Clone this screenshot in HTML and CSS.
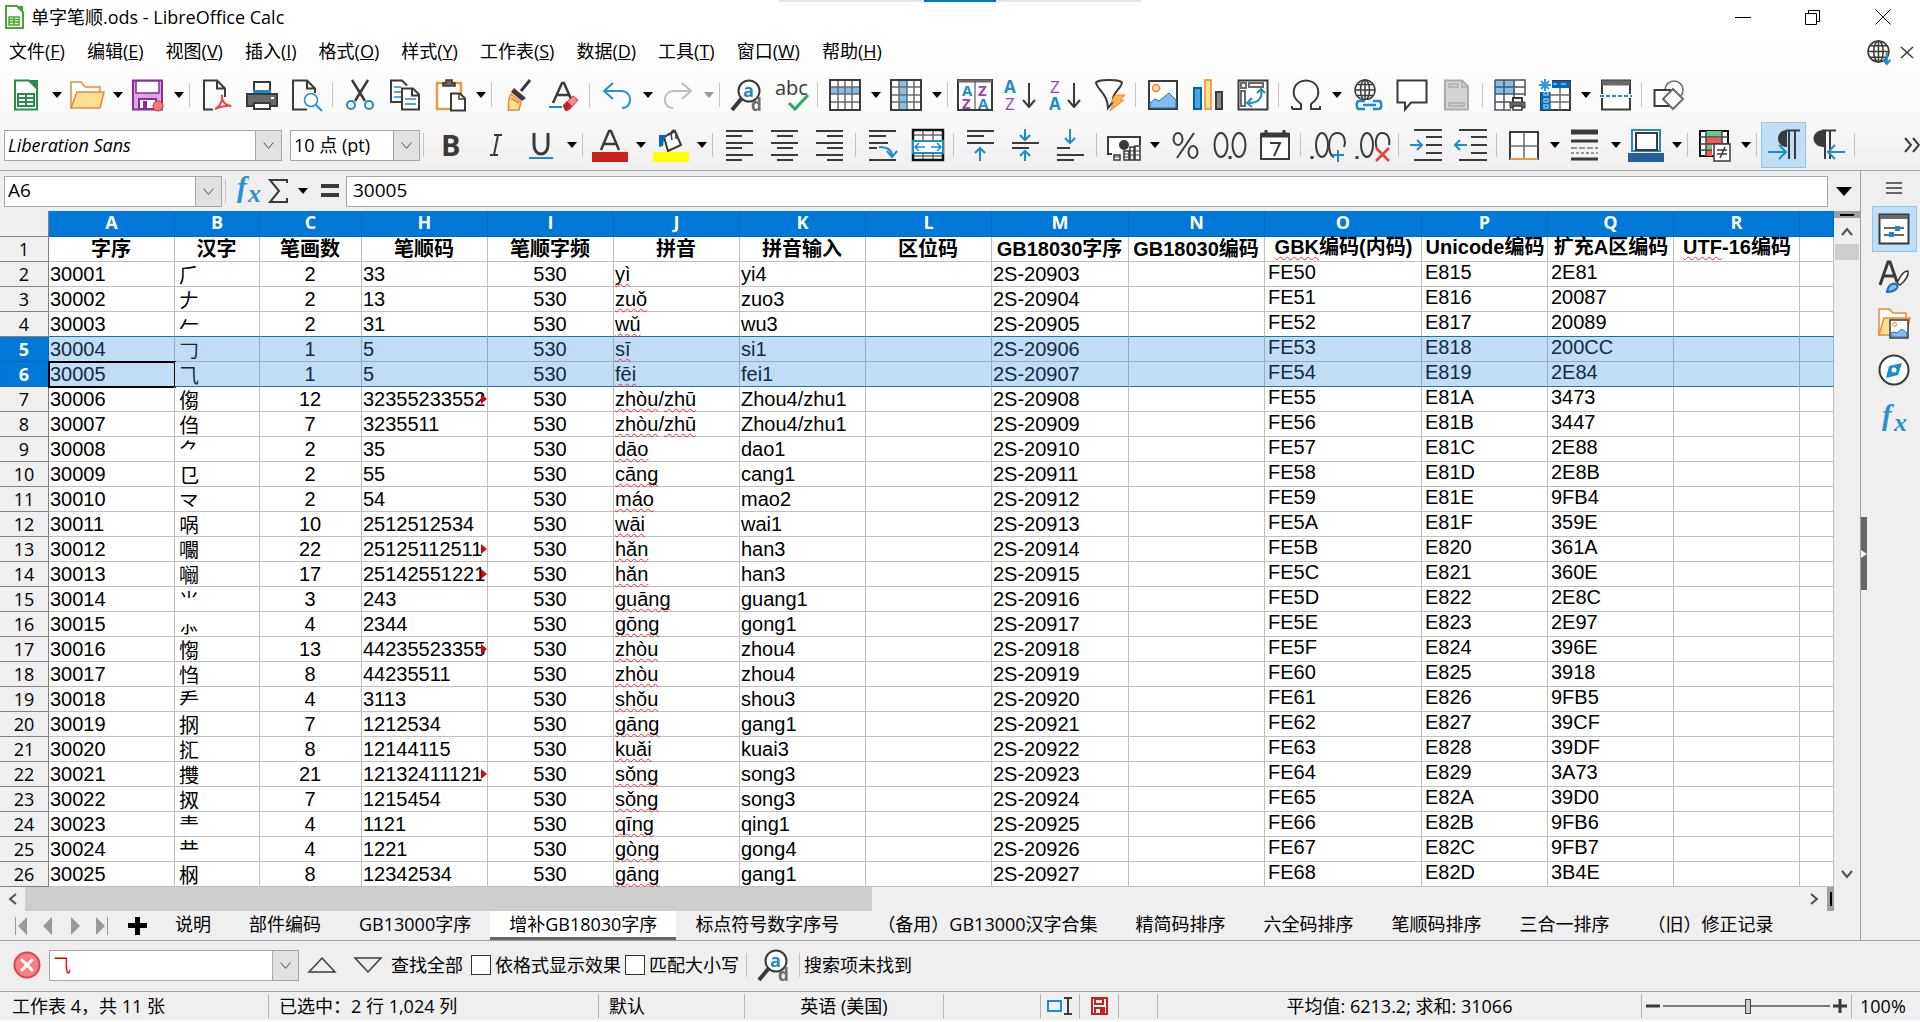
FILE: index.html
```
<!DOCTYPE html>
<html lang="zh-CN">
<head>
    <meta charset="UTF-8">
    <meta name="viewport" content="width=device-width, initial-scale=1.0">
    <title>单字笔顺.ods - LibreOffice Calc</title>
    <link rel="stylesheet" href="styles.css">
</head>
<body>
    <header class="top">
        <div class="snap-bar"><span></span></div>
        <div class="titlebar">
            <svg class="app-icon" viewBox="0 0 20 24"><path d="M2 1h11l6 6v16H2z" fill="#fff" stroke="#43a832" stroke-width="2"/><path d="M12 1h7v7z" fill="#43a832"/><path d="M5 12h10v8H5zM5 14.500h10M5 17h10M10 12v8" fill="none" stroke="#43a832" stroke-width="1.500"/></svg>
            <h1>单字笔顺.ods - LibreOffice Calc</h1>
            <div class="window-buttons">
                <button aria-label="最小化"><svg viewBox="0 0 16 16"><path d="M0 8.500h16"/></svg></button>
                <button aria-label="还原"><svg viewBox="0 0 16 16"><path d="M.5 4.500h11v11H.5zM3.500 4.500v-3h11v11h-3"/></svg></button>
                <button aria-label="关闭"><svg viewBox="0 0 16 16"><path d="M.5.5l15 15M15.500.5l-15 15"/></svg></button>
            </div>
        </div>
        <nav class="menubar">
            <button>文件(<u>F</u>)</button>
            <button>编辑(<u>E</u>)</button>
            <button>视图(<u>V</u>)</button>
            <button>插入(<u>I</u>)</button>
            <button>格式(<u>O</u>)</button>
            <button>样式(<u>Y</u>)</button>
            <button>工作表(<u>S</u>)</button>
            <button>数据(<u>D</u>)</button>
            <button>工具(<u>T</u>)</button>
            <button>窗口(<u>W</u>)</button>
            <button>帮助(<u>H</u>)</button>
            <div class="menubar-right">
                <svg width="25" height="25" viewBox="0 0 24 24" fill="none" stroke="#3a3a38" stroke-width="1.500"><circle cx="11" cy="11" r="10"/><ellipse cx="11" cy="11" rx="4.500" ry="10"/><path d="M1 11h20M11 1v20M3 5.500h16M3 16.500h16"/><path d="M19 12v10M15.500 19l3.500 4 3.500-4" stroke="#1e8bcd" stroke-width="2"/></svg>
                <svg width="14" height="14" viewBox="0 0 14 14" stroke="#3a3a38" stroke-width="1.500"><path d="M1 2l12 11M13 2L1 13"/></svg>
            </div>
        </nav>

        <div class="toolbar main-tools">
            <button class="tool drop" aria-label="新建"><svg viewBox="0 0 32 32"><path d="M5 1.500h14l8 8v21H5z" fill="#fff" stroke="#2e8b4f" stroke-width="2"/><path d="M17 1h11v10z" fill="#2e8b4f"/><path d="M8 15h16v12H8zM8 19h16M8 23h16M16 15v12" fill="none" stroke="#2e8b4f" stroke-width="2"/></svg></button>
            <button class="tool drop wide" aria-label="打开"><svg viewBox="0 0 36 32"><path d="M2 29V3h10l4 5h15v6" fill="#fff" stroke="#ed8733" stroke-width="1.500"/><path d="M8 13h27l-4 16H2z" fill="#fadf95" stroke="#ed8733" stroke-width="1.500"/></svg></button>
            <button class="tool drop" aria-label="保存"><svg viewBox="0 0 32 32"><path d="M1 1.500h29v29H1z" fill="#d9a9dd" stroke="#8a2d9b" stroke-width="2"/><path d="M4 2h23v12H4z" fill="#fff" stroke="#8a2d9b" stroke-width="1.500"/><path d="M7 20h17v10H7z" fill="#fff" stroke="#8a2d9b" stroke-width="2"/><path d="M11 22h4v8h-4z" fill="#8a2d9b"/><circle cx="26" cy="27" r="5" fill="#f8777a" stroke="#c9303a"/></svg></button>
            <i class="sep"></i>
            <button class="tool" aria-label="导出为 PDF"><svg viewBox="0 0 32 32" fill="none"><path d="M12 30.500H3v-29h13l8 8V18M16 1.500v8h8" stroke="#3a3a38" stroke-width="2"/><path d="M14 30c5-2 8-9 7-14-1 6 4 11 9 11-6-1-11 1-16 3z" stroke="#e8474d" stroke-width="2"/></svg></button>
            <button class="tool" aria-label="打印"><svg viewBox="0 0 32 32"><path d="M8 13V3h16v10" fill="#fff" stroke="#3a3a38" stroke-width="2"/><path d="M7 11h18v4H7z" fill="#1e8bcd"/><path d="M1 15h30v12H1z" fill="#6a6a68" stroke="#3a3a38" stroke-width="2"/><path d="M8 24h16v6H8z" fill="#fff" stroke="#3a3a38" stroke-width="2"/><path d="M25 19h3" stroke="#fff" stroke-width="2"/></svg></button>
            <button class="tool" aria-label="打印预览"><svg viewBox="0 0 32 32" fill="none"><path d="M16 30.500H2v-29h14l8 8V14M16 1.500v8h8" stroke="#3a3a38" stroke-width="2"/><circle cx="20" cy="21" r="6.500" fill="#fff" stroke="#1e8bcd" stroke-width="1.500"/><path d="M25 26l6 6" stroke="#1e8bcd" stroke-width="2"/></svg></button>
            <i class="sep"></i>
            <button class="tool" aria-label="剪切"><svg viewBox="0 0 32 32" fill="none"><path d="M8 1l13 21M24 1L11 22" stroke="#3a3a38" stroke-width="2.500"/><circle cx="7" cy="26" r="4" stroke="#1e8bcd" stroke-width="2"/><circle cx="25" cy="26" r="4" stroke="#1e8bcd" stroke-width="2"/></svg></button>
            <button class="tool" aria-label="复制"><svg viewBox="0 0 32 32" fill="none"><path d="M12 23H2V1.500h11l5 5" stroke="#3a3a38" stroke-width="2"/><path d="M5 8h7M5 13h7M5 18h7" stroke="#1e8bcd" stroke-width="1.500"/><path d="M13 9.500h11l6 6v15H13zM23 9.500v7h7" fill="#fff" stroke="#3a3a38" stroke-width="2"/><path d="M16 20h11M16 25h11" stroke="#1e8bcd" stroke-width="1.500"/></svg></button>
            <button class="tool drop" aria-label="粘贴"><svg viewBox="0 0 32 32"><path d="M3 4h24v26H3z" fill="#fff" stroke="#ed9a3f" stroke-width="2.500"/><path d="M9 7V4h3V1h6v3h3v3z" fill="#6a6a68" stroke="#3a3a38" stroke-width="1.500"/><path d="M17 14.500h9l5 5v12H17z" fill="#fff" stroke="#3a3a38" stroke-width="2"/><path d="M25 14v6h6" fill="none" stroke="#3a3a38" stroke-width="1.500"/></svg></button>
            <i class="sep"></i>
            <button class="tool" aria-label="克隆格式"><svg viewBox="0 0 32 32"><path d="M27 1l-9 11" stroke="#3a3a38" stroke-width="3"/><path d="M11 9l12 10-4 3-11-9z" fill="#3a3a38"/><path d="M8 15l10 8-2 8H5c2-4-2-6 3-16z" fill="#fadf95" stroke="#ed8733" stroke-width="1.500"/><path d="M8 19l8 5" stroke="#ed8733" stroke-width="2"/></svg></button>
            <button class="tool" aria-label="清除格式"><svg viewBox="0 0 32 32"><path d="M5 24L14 4h2l7 16M9 16h12" fill="none" stroke="#3a3a38" stroke-width="2.500"/><path d="M1 28h13" stroke="#1e8bcd" stroke-width="2"/><path d="M15 27l10-10 5 4-8 9-4 2z" fill="#f8898c" stroke="#d8323a"/><path d="M15 26l4-4 5 5-4 4h-3z" fill="#c9211e"/></svg></button>
            <i class="sep"></i>
            <button class="tool drop" aria-label="撤销"><svg viewBox="0 0 32 32" fill="none" stroke="#2a8fd0" stroke-width="2"><path d="M12 4L3 12l9 8M3 12h17c12 0 12 17 1 17"/></svg></button>
            <button class="tool drop faded" aria-label="恢复"><svg viewBox="0 0 32 32" fill="none" stroke="#bdbdbd" stroke-width="2"><path d="M20 4l9 8-9 8M29 12H12c-12 0-12 17-1 17"/></svg></button>
            <i class="sep"></i>
            <button class="tool" aria-label="查找与替换"><svg viewBox="0 0 32 32"><circle cx="18" cy="12" r="10.500" fill="#fff" stroke="#3a3a38" stroke-width="2"/><path d="M11 19L1 31" stroke="#3a3a38" stroke-width="4"/><text x="12" y="18" font-size="18" font-weight="bold" fill="#1e8bcd">a</text><text x="20" y="32" font-size="17" font-weight="bold" fill="#6a6a68">d</text></svg></button>
            <button class="tool wide" aria-label="拼写检查"><svg viewBox="0 0 36 32"><text x="1" y="16" font-size="20" fill="#3a3a38">abc</text><path d="M15 24l6 6 13-14" fill="none" stroke="#2fa866" stroke-width="3"/></svg></button>
            <i class="sep"></i>
            <button class="tool drop" aria-label="行"><svg viewBox="0 0 32 32"><path d="M1 1h30v30H1z" fill="#fff"/><path d="M1 8h30v7H1z" fill="#83beec"/><path d="M9 1v30M16 1v30M23 1v30M1 8h30M1 15h30M1 23h30" stroke="#6a6a68" stroke-width="1.500"/><path d="M1 1h30v30H1z" fill="none" stroke="#3a3a38" stroke-width="2"/></svg></button>
            <button class="tool drop" aria-label="列"><svg viewBox="0 0 32 32"><path d="M1 1h30v30H1z" fill="#fff"/><path d="M9 1h8v30H9z" fill="#83beec"/><path d="M9 1v30M17 1v30M24 1v30M1 8h30M1 16h30M1 23h30" stroke="#6a6a68" stroke-width="1.500"/><path d="M1 1h30v30H1z" fill="none" stroke="#3a3a38" stroke-width="2"/></svg></button>
            <i class="sep"></i>
            <button class="tool wide" aria-label="排序"><svg viewBox="0 0 36 32"><path d="M1 1h34v30H1z" fill="#fff" stroke="#3a3a38" stroke-width="2"/><path d="M1 2h34" stroke="#6a6a68" stroke-width="3"/><path d="M18 3v28" stroke="#3a3a38"/><g font-size="15" font-weight="bold"><text x="5" y="17" fill="#1e8bcd">A</text><text x="5" y="30" fill="#a03fb0">Z</text><text x="21" y="17" fill="#a03fb0">Z</text><text x="21" y="30" fill="#1e8bcd">A</text></g></svg></button>
            <button class="tool" aria-label="升序排序"><svg viewBox="0 0 32 32"><g font-size="17"><text x="0" y="14" fill="#1e8bcd" font-weight="bold">A</text><text x="1" y="31" fill="#a03fb0">Z</text></g><path d="M25 4v24M19 21l6 7 6-7" fill="none" stroke="#3a3a38" stroke-width="2"/></svg></button>
            <button class="tool" aria-label="降序排序"><svg viewBox="0 0 32 32"><g font-size="17"><text x="1" y="14" fill="#a03fb0">Z</text><text x="0" y="31" fill="#1e8bcd" font-weight="bold">A</text></g><path d="M25 4v24M19 21l6 7 6-7" fill="none" stroke="#3a3a38" stroke-width="2"/></svg></button>
            <button class="tool" aria-label="自动筛选"><svg viewBox="0 0 32 32"><path d="M2 4c0-4 26-4 26 0-1 5-9 10-9 16v3l-5 6c0-13-10-18-12-25z" fill="#fff" stroke="#3a3a38" stroke-width="2"/><path d="M21 16h10l-5 5h4L16 32l4-9h-3z" fill="#fbb650" stroke="#ed8733"/></svg></button>
            <i class="sep"></i>
            <button class="tool" aria-label="插入图像"><svg viewBox="0 0 32 32"><path d="M2 2h28v28H2z" fill="#fff" stroke="#3a3a38" stroke-width="2"/><circle cx="9" cy="9" r="3.500" fill="#fadf95" stroke="#ed8733" stroke-width="1.500"/><path d="M3 29v-5l5-4 4 2 10-8 7 7v8z" fill="#83beec" stroke="#1e6fb8"/></svg></button>
            <button class="tool" aria-label="插入图表"><svg viewBox="0 0 32 32"><path d="M2 9h7v21H2z" fill="#4aa5e0" stroke="#0063b1" stroke-width="2"/><path d="M13 1h6v29h-6z" fill="#fadf95" stroke="#ed8733" stroke-width="1.500"/><path d="M24 13h6v17h-6z" fill="#8a8a88" stroke="#3a3a38" stroke-width="2"/></svg></button>
            <button class="tool" aria-label="数据透视表"><svg viewBox="0 0 32 32" fill="none"><path d="M1.500 1.500h29v29h-29z" fill="#fff" stroke="#3a3a38" stroke-width="2"/><path d="M4 4h5v5H4zM12 4h14v4H12zM4 12h4v15H4z" stroke="#6a6a68" stroke-width="2"/><path d="M24 11c2 8-3 13-12 13M20 14l4-4 4 4M15 19l-5 5 5 4" stroke="#1e8bcd" stroke-width="2"/></svg></button>
            <i class="sep"></i>
            <button class="tool drop" aria-label="特殊字符"><svg viewBox="0 0 32 32" fill="none" stroke="#3a3a38" stroke-width="2"><path d="M2 30h9v-5C-2 16 4 1.500 16 1.500S34 16 21 25v5h9v-3M2 30v-3"/></svg></button>
            <button class="tool" aria-label="插入超链接"><svg viewBox="0 0 32 32" fill="none" stroke="#3a3a38" stroke-width="1.500"><circle cx="14" cy="11" r="10"/><ellipse cx="14" cy="11" rx="4.500" ry="10"/><path d="M4 11h20M14 1v20M6 5.500h16M6 16.500h16"/><path d="M5 21h24v10H5z" fill="#fafafa" stroke="none"/><path d="M14 22H8c-3 0-3 8 0 8h6M22 22h6c3 0 3 8 0 8h-6M12 26h13" stroke="#1e8bcd" stroke-width="2.500"/></svg></button>
            <button class="tool" aria-label="插入批注"><svg viewBox="0 0 32 32"><path d="M1.500 1.500h29v22H15l-6 7v-7H1.500z" fill="#fff" stroke="#3a3a38" stroke-width="2"/></svg></button>
            <button class="tool" aria-label="页眉和页脚"><svg viewBox="0 0 32 32"><path d="M4 1.500h17l6 6v23H4z" fill="#d4d4d4" stroke="#ababab" stroke-width="2"/><path d="M8 5h9v3H8zM8 24h15v3H8zM21 1v7h6" fill="none" stroke="#ababab" stroke-width="1.500"/></svg></button>
            <i class="sep"></i>
            <button class="tool" aria-label="定义打印区域"><svg viewBox="0 0 32 32"><path d="M1 1h30v30H1z" fill="#fff"/><path d="M1 1h20v14H1z" fill="#83beec"/><path d="M1 1h30v16M1 1v30h16M10 1v30M20 1v17M1 8h30M1 15h30M1 23h15" fill="none" stroke="#4a5560" stroke-width="1.500"/><path d="M19 23v-4h9v4" fill="#fff" stroke="#3a3a38" stroke-width="2"/><path d="M16 23h15v6H16z" fill="#6a6a68" stroke="#3a3a38"/><path d="M19 27h9v4h-9z" fill="#fff" stroke="#3a3a38" stroke-width="1.500"/></svg></button>
            <button class="tool drop" aria-label="冻结行和列"><svg viewBox="0 0 32 32"><path d="M2 2h29v29H2z" fill="#fff" stroke="#3a3a38" stroke-width="2"/><path d="M11 9v22M21 9v22M11 16h20M11 23h20" stroke="#6a6a68" stroke-width="1.500"/><path d="M2 2h29v7H11v22H2z" fill="#0069bd"/><path d="M14 5h4M22 5h5M5 13h4v3H5zM5 20h4v3H5zM5 26h4v3H5z" fill="none" stroke="#83beec" stroke-width="1.500"/><path d="M-1-1h14v14H-1z" fill="#fcfcfc"/><path d="M6 0v12M0 6h12M2 2l8 8M10 2l-8 8" stroke="#2a9be0" stroke-width="2"/></svg></button>
            <button class="tool" aria-label="拆分窗口"><svg viewBox="0 0 32 32"><path d="M2 1.500h28v29H2z" fill="#fff" stroke="#3a3a38" stroke-width="2"/><path d="M2 4h28" stroke="#6a6a68" stroke-width="5"/><path d="M0 17h32" stroke="#fff" stroke-width="4"/><path d="M0 17h32" stroke="#1e8bcd" stroke-width="2" stroke-dasharray="4 2"/></svg></button>
            <i class="sep"></i>
            <button class="tool" aria-label="显示绘图功能"><svg viewBox="0 0 32 32" fill="#fff" stroke-width="1.500"><circle cx="21" cy="11" r="9" stroke="#6a6a68"/><path d="M1.500 11h16v16h-16z" stroke="#3a3a38" stroke-width="2"/><path d="M20 10l10 10-10 10-10-10z" stroke="#6a6a68" stroke-width="2"/></svg></button>
        </div>

        <div class="toolbar format-tools">
            <div class="combo font-name"><select aria-label="字体名称"><option>Liberation Sans</option></select><svg class="chev" viewBox="0 0 26 30"><path d="M8 12l5 6 5-6"/></svg></div>
            <div class="combo font-size"><select aria-label="字号"><option>10 点 (pt)</option></select><svg class="chev" viewBox="0 0 26 30"><path d="M8 12l5 6 5-6"/></svg></div>
            <i class="sep"></i>
            <button class="tool" aria-label="粗体"><svg viewBox="0 0 32 32"><text x="6" y="27" font-size="29" font-weight="bold" fill="#3a3a38">B</text></svg></button>
            <button class="tool" aria-label="斜体"><svg viewBox="0 0 32 32"><path d="M14 6h8M10 26h8M18 6l-4 20" stroke="#3a3a38" stroke-width="2"/></svg></button>
            <button class="tool drop" aria-label="下划线"><svg viewBox="0 0 32 32" fill="none"><path d="M9 4v12c0 12 14 12 14 0V4" stroke="#3a3a38" stroke-width="3"/><path d="M4 29h24" stroke="#1e8bcd" stroke-width="2"/></svg></button>
            <i class="sep"></i>
            <button class="tool drop wide" aria-label="字体颜色"><svg viewBox="0 0 36 32"><path d="M9 21L17 2h2l8 19M12 15h12" fill="none" stroke="#3a3a38" stroke-width="2.500"/><path d="M0 23h36v10H0z" fill="#c9211e"/></svg></button>
            <button class="tool drop wide" aria-label="背景颜色"><svg viewBox="0 0 36 32"><path d="M11 8l11-6 6 14-13 6z" fill="#fff" stroke="#3a3a38" stroke-width="2"/><path d="M19 11c-3-13 5-13 4-1" fill="none" stroke="#3a3a38" stroke-width="1.500"/><path d="M6 18V6h9l-4 4-1 7z" fill="#0069bd"/><path d="M0 23h36v10H0z" fill="#ff0"/></svg></button>
            <i class="sep"></i>
            <button class="tool" aria-label="左对齐"><svg viewBox="0 0 32 32" stroke="#3a3a38" stroke-width="2"><path d="M2 2h27M2 7h16M2 14h27M2 19h16M2 26h27M2 31h16"/></svg></button>
            <button class="tool" aria-label="水平居中"><svg viewBox="0 0 32 32" stroke="#3a3a38" stroke-width="2"><path d="M2 2h27M8 7h16M2 14h27M8 19h16M2 26h27M8 31h16"/></svg></button>
            <button class="tool" aria-label="右对齐"><svg viewBox="0 0 32 32" stroke="#3a3a38" stroke-width="2"><path d="M2 2h27M13 7h16M2 14h27M13 19h16M2 26h27M13 31h16"/></svg></button>
            <i class="sep"></i>
            <button class="tool" aria-label="自动换行"><svg viewBox="0 0 32 32" fill="none" stroke="#3a3a38" stroke-width="2"><path d="M2 2h27M2 7h17M2 14h19M2 19h8M2 31h27"/><path d="M12 18c8 0 13 2 13 9M20 22l5 6 5-6" stroke="#1e8bcd"/></svg></button>
            <button class="tool" aria-label="合并居中"><svg viewBox="0 0 32 32"><path d="M1 1h30v30H1z" fill="#fff" stroke="#111" stroke-width="2.500"/><path d="M11 2v28M21 2v28M2 6h28M2 27h28" stroke="#6a6a68" stroke-width="1.500"/><path d="M1 12h30v12H1z" fill="#fff" stroke="#1e8bcd" stroke-width="2"/><path d="M3 18h10M19 18h10M7 14l-4 4 4 4M25 14l4 4-4 4" fill="none" stroke="#1e8bcd" stroke-width="1.500"/></svg></button>
            <i class="sep"></i>
            <button class="tool" aria-label="顶端对齐"><svg viewBox="0 0 32 32" fill="none" stroke="#3a3a38" stroke-width="2"><path d="M2 2h27M2 7h17M2 14h27"/><path d="M15 32V19M10 24l5-5 5 5" stroke="#1e8bcd"/></svg></button>
            <button class="tool" aria-label="垂直居中"><svg viewBox="0 0 32 32" fill="none" stroke="#3a3a38" stroke-width="2"><path d="M2 14h27M2 19h17"/><path d="M15 0v11M10 6l5 5 5-5M15 32V22M10 27l5-5 5 5" stroke="#1e8bcd"/></svg></button>
            <button class="tool" aria-label="底端对齐"><svg viewBox="0 0 32 32" fill="none" stroke="#3a3a38" stroke-width="2"><path d="M2 19h13M2 26h27M2 31h17"/><path d="M15 0v14M10 9l5 5 5-5" stroke="#1e8bcd"/></svg></button>
            <i class="sep"></i>
            <button class="tool drop wide" aria-label="货币格式"><svg viewBox="0 0 36 32" fill="#fff" stroke="#3a3a38" stroke-width="2"><path d="M6 25H2V8h32v8"/><circle cx="18" cy="16" r="4" fill="#3a3a38"/><path d="M18 22h5v9h-5zM24 18h4v13h-4zM29 17h5v14h-5zM8 26h6v5H8z" stroke-width="1.500"/><path d="M18 25h5M18 28h5M24 22h10M24 26h10M8 28h6" stroke-width="1"/></svg></button>
            <button class="tool" aria-label="百分比格式"><svg viewBox="0 0 32 32" fill="none" stroke="#3a3a38" stroke-width="2"><ellipse cx="9" cy="10" rx="4.500" ry="6"/><ellipse cx="24" cy="23" rx="4.500" ry="6"/><path d="M25 4L8 29"/></svg></button>
            <button class="tool wide" aria-label="数字格式"><svg viewBox="0 0 36 32" fill="none" stroke="#3a3a38" stroke-width="2"><ellipse cx="9" cy="16" rx="6.500" ry="12"/><ellipse cx="27" cy="16" rx="6.500" ry="12"/><path d="M18 27v3" stroke-width="3"/></svg></button>
            <button class="tool" aria-label="日期格式"><svg viewBox="0 0 32 32"><path d="M2 5h28v25H2z" fill="#fff" stroke="#3a3a38" stroke-width="2"/><path d="M2 6h28" stroke="#3a3a38" stroke-width="5"/><path d="M7 1v5M25 1v5" stroke="#3a3a38" stroke-width="3"/><path d="M11 14h10l-6 13" fill="none" stroke="#3a3a38" stroke-width="2"/></svg></button>
            <i class="sep"></i>
            <button class="tool wide" aria-label="增加小数位"><svg viewBox="0 0 36 32" fill="none" stroke="#3a3a38" stroke-width="2"><path d="M2 27v3" stroke-width="3"/><ellipse cx="12" cy="16" rx="6" ry="12"/><path d="M24 28c-7-2-7-24 3-24 8 0 9 9 7 14"/><path d="M28 21v12M22 26h12" stroke="#1e8bcd"/></svg></button>
            <button class="tool wide" aria-label="减少小数位"><svg viewBox="0 0 36 32" fill="none" stroke="#3a3a38" stroke-width="2"><path d="M2 27v3" stroke-width="3"/><ellipse cx="12" cy="16" rx="6" ry="12"/><path d="M22 20c-3-8 0-16 5-16 7 0 8 7 7 12"/><path d="M21 19l13 13M34 19L21 32" stroke="#ed3d3b" stroke-width="2.500"/></svg></button>
            <i class="sep"></i>
            <button class="tool wide" aria-label="增加缩进"><svg viewBox="0 0 36 32" fill="none" stroke="#3a3a38" stroke-width="2"><path d="M6 1h28M18 8h16M18 16h16M18 24h16M6 31h28"/><path d="M2 16h12M9 11l5 5-5 5" stroke="#1e8bcd"/></svg></button>
            <button class="tool wide" aria-label="减少缩进"><svg viewBox="0 0 36 32" fill="none" stroke="#3a3a38" stroke-width="2"><path d="M6 1h28M18 8h16M18 16h16M18 24h16M6 31h28"/><path d="M14 16H2M7 11l-5 5 5 5" stroke="#1e8bcd"/></svg></button>
            <i class="sep"></i>
            <button class="tool drop" aria-label="边框"><svg viewBox="0 0 32 32"><path d="M2 3h28v27H2z" fill="#fff" stroke="#3a3a38" stroke-width="2"/><path d="M16 3v27M2 17h28" stroke="#6a6a68" stroke-width="1.500"/><path d="M2 30h28" stroke="#ed9a3f" stroke-width="2"/></svg></button>
            <button class="tool drop" aria-label="边框样式"><svg viewBox="0 0 32 32" stroke="#3a3a38"><path d="M2 3h27" stroke-width="5"/><path d="M2 12h27" stroke-width="3"/><path d="M2 19h27" stroke-dasharray="6 2"/><path d="M2 24h27" stroke-dasharray="3 2"/><path d="M2 30h27" stroke-width="3"/></svg></button>
            <button class="tool drop wide" aria-label="边框颜色"><svg viewBox="0 0 36 32"><path d="M4 1h28v21H4z" fill="#fff" stroke="#1e8bcd" stroke-width="2"/><path d="M8 4h21v17H8z" fill="#fff" stroke="#3a3a38" stroke-width="2"/><path d="M0 24h36v9H0z" fill="#2a6099"/></svg></button>
            <i class="sep"></i>
            <button class="tool drop" aria-label="条件格式"><svg viewBox="0 0 32 32"><path d="M1 2h28v25H1z" fill="#fff" stroke="#111" stroke-width="2"/><path d="M7 2h16v6H7zM7 15h6v5H7z" fill="#6fc58a"/><path d="M7 9h16v6H7zM7 21h6v6H7z" fill="#f0585c"/><path d="M7 2v25M23 2v12M1 8h28M1 15h28M1 21h12" stroke="#444" stroke-width="1.500"/><path d="M15 15h16v17H15z" fill="#fff" stroke="#3a3a38" stroke-width="1.500"/><path d="M18 21h10M18 25h10M26 18l-5 11" stroke="#3a3a38" stroke-width="1.500"/></svg></button>
            <i class="sep"></i>
            <button class="tool active" aria-label="从左到右" aria-pressed="true"><svg viewBox="0 0 32 32" fill="none"><path d="M19 18c-12 0-12-17 0-17z" fill="#3a3a38"/><path d="M18 1.500h14M21 1v29M27 1v29" stroke="#3a3a38" stroke-width="2"/><path d="M0 23h18M11 16l7 7-7 7" stroke="#1e8bcd" stroke-width="2"/></svg></button>
            <button class="tool" aria-label="从右到左"><svg viewBox="0 0 32 32" fill="none"><path d="M11 18C-3 18-3 1 11 1z" fill="#3a3a38"/><path d="M9 1.500h14M12 1v29M17 1v29" stroke="#3a3a38" stroke-width="2"/><path d="M32 23H15M22 16l-7 7 7 7" stroke="#1e8bcd" stroke-width="2"/></svg></button>
            <i class="sep"></i>
            <button class="more" aria-label="更多"><svg width="16" height="18" viewBox="0 0 16 18" fill="none" stroke="#3a3a38" stroke-width="2"><path d="M1 2l6 7-6 7M9 2l6 7-6 7"/></svg></button>
        </div>
    </header>

    <main class="work">
        <div class="document">
            <div class="formula-bar">
                <div class="combo name-box"><input type="text" value="A6" aria-label="名称框"><svg class="chev" viewBox="0 0 26 30"><path d="M8 12l5 6 5-6"/></svg></div>
                <i class="sep"></i>
                <button class="fx" aria-label="函数向导"><svg viewBox="0 0 28 32"><text x="2" y="22" class="fx-f">f</text><text x="13" y="27" class="fx-x">x</text></svg></button>
                <button class="sigma" aria-label="选择函数"><svg viewBox="0 0 20 26" fill="none" stroke="#3a3a38" stroke-width="2"><path d="M19 5V2H2l9 11L2 24h17v-4"/></svg></button>
                <button class="equals" aria-label="公式"><svg viewBox="0 0 18 14"><path d="M0 2h18M0 11h18" stroke="#3a3a38" stroke-width="4"/></svg></button>
                <input class="formula" type="text" value="30005" aria-label="编辑栏">
                <button class="expand" aria-label="展开编辑栏"></button>
            </div>

            <div class="sheet-area">
                <div class="sheet">
                    <table>
                        <colgroup>
                            <col class="w-head"><col class="w-m"><col class="w-b"><col class="w-c"><col class="w-m"><col class="w-m"><col class="w-m"><col class="w-m"><col class="w-m"><col class="w-l"><col class="w-n"><col class="w-o"><col class="w-m"><col class="w-m"><col class="w-m"><col>
                        </colgroup>
                        <thead>
                            <tr><th></th><th>A</th><th>B</th><th>C</th><th>H</th><th>I</th><th>J</th><th>K</th><th>L</th><th>M</th><th>N</th><th>O</th><th>P</th><th>Q</th><th>R</th><th></th></tr>
                        </thead>
                        <tbody id="rows">
                            <tr class="titles"><th>1</th><td>字序</td><td>汉字</td><td>笔画数</td><td>笔顺码</td><td>笔顺字频</td><td>拼音</td><td>拼音输入</td><td>区位码</td><td>GB18030字序</td><td>GB18030编码</td><td class="raised"><span class="spell">GBK</span>编码(内码)</td><td class="raised">Unicode编码</td><td class="raised">扩充A区编码</td><td class="raised"><span class="spell">UTF</span>-16编码</td><td></td></tr>
                        </tbody>
                    </table>
                </div>
                <div class="vscroll">
                    <div class="split-v"></div>
                    <svg class="up" viewBox="0 0 12 9"><path d="M1 8l5-6 5 6"/></svg>
                    <div class="thumb-v"></div>
                    <svg class="down" viewBox="0 0 12 9"><path d="M1 1l5 6 5-6"/></svg>
                </div>
            </div>

            <div class="hscroll">
                <svg viewBox="0 0 9 12"><path d="M8 1L2 6l6 5"/></svg>
                <div class="thumb-h"></div>
                <div class="track-h"></div>
                <svg viewBox="0 0 9 12"><path d="M1 1l6 5-6 5"/></svg>
                <div class="split-h"></div>
            </div>

            <div class="tabs">
                <div class="tab-nav">
                    <button aria-label="第一张"><svg viewBox="0 0 12 18"><path d="M12 0v18L3 9zM0 0h1v18H0z"/></svg></button>
                    <button aria-label="上一张"><svg viewBox="0 0 12 18"><path d="M10 0v18L1 9z"/></svg></button>
                    <button aria-label="下一张"><svg viewBox="0 0 12 18"><path d="M2 0v18l9-9z"/></svg></button>
                    <button aria-label="最后一张"><svg viewBox="0 0 12 18"><path d="M0 0v18l9-9zM11 0h1v18h-1z"/></svg></button>
                </div>
                <button class="add-tab" aria-label="添加工作表"><svg viewBox="0 0 20 20"><path d="M7 1h5v6h7v5h-7v7H7v-7H0V7h7z"/></svg></button>
                <button class="tab">说明</button>
                <button class="tab">部件编码</button>
                <button class="tab">GB13000字序</button>
                <button class="tab current">增补GB18030字序</button>
                <button class="tab">标点符号数字序号</button>
                <button class="tab">（备用）GB13000汉字合集</button>
                <button class="tab">精简码排序</button>
                <button class="tab">六全码排序</button>
                <button class="tab">笔顺码排序</button>
                <button class="tab">三合一排序</button>
                <button class="tab">（旧）修正记录</button>
            </div>
        </div>

        <aside class="sidebar">
            <div class="grip"><svg viewBox="0 0 6 10"><path d="M0 1l6 4-6 4z"/></svg></div>
            <button class="side-menu" aria-label="侧边栏设置"><svg viewBox="0 0 16 12"><path d="M0 1h16M0 6h16M0 11h16" stroke="#3a3a38" stroke-width="1.500"/></svg></button>
            <button class="side active" aria-label="属性"><svg viewBox="0 0 32 32"><path d="M1.500 1.500h29v29h-29z" fill="#fff" stroke="#3a3a38" stroke-width="2"/><path d="M2 4h28" stroke="#6a6a68" stroke-width="4"/><path d="M6 15h20M6 22h20" stroke="#3a3a38" stroke-width="1.500"/><path d="M17 13h5v5h-5zM11 19h5v5h-5z" fill="#1e8bcd"/></svg></button>
            <button class="side" aria-label="样式"><svg viewBox="0 0 32 32"><path d="M2 25L10 2h2l7 20M5 16h12" fill="none" stroke="#3a3a38" stroke-width="3"/><path d="M30 11c-5 0-8 6-11 12l3 2c5-4 9-8 8-14z" fill="#fff" stroke="#3a3a38" stroke-width="1.500"/><path d="M9 32c1-7 5-9 9-8 4 2 0 8-9 8z" fill="#83beec" stroke="#1e6fb8" stroke-width="2"/></svg></button>
            <button class="side" aria-label="图库"><svg viewBox="0 0 32 32"><path d="M1 28V2h10l4 4h13v5" fill="#fff" stroke="#ed8733" stroke-width="1.500"/><path d="M6 11h26l-4 17H1z" fill="#fadf95" stroke="#ed8733" stroke-width="1.500"/><path d="M12 13h18v18H12z" fill="#fff" stroke="#3a3a38" stroke-width="1.500"/><circle cx="16.500" cy="17.500" r="2" fill="none" stroke="#ed8733"/><path d="M13 30v-4l3-1 3 1 5-4 5 4v4z" fill="#83beec" stroke="#1e6fb8"/></svg></button>
            <button class="side" aria-label="导航"><svg viewBox="0 0 32 32"><circle cx="16" cy="16" r="14.500" fill="#fff" stroke="#3a3a38" stroke-width="2"/><path d="M24 9l-4 12-12 3 3-12z" fill="#1e8bcd"/><circle cx="16" cy="16" r="2.500" fill="#fff"/></svg></button>
            <button class="side" aria-label="函数"><svg viewBox="0 0 28 32"><text x="2" y="24" class="fx-f">f</text><text x="14" y="30" class="fx-x">x</text></svg></button>
        </aside>
    </main>

    <div class="findbar">
        <button class="close-find" aria-label="关闭查找栏"><svg viewBox="0 0 28 28"><circle cx="14" cy="14" r="12.500" fill="#f77e81" stroke="#d24a50" stroke-width="2"/><path d="M8 8l12 12M20 8L8 20" stroke="#fff" stroke-width="3"/></svg></button>
        <div class="combo find-text"><input type="text" value="⺄" aria-label="查找"><svg class="chev" viewBox="0 0 26 30"><path d="M8 12l5 6 5-6"/></svg></div>
        <button class="find-step" aria-label="查找上一处"><svg viewBox="0 0 30 16"><path d="M2 15L15 1l13 14z" fill="none" stroke="#3a3a38" stroke-width="1.500"/></svg></button>
        <button class="find-step" aria-label="查找下一处"><svg viewBox="0 0 30 16"><path d="M2 1l13 14L28 1z" fill="none" stroke="#3a3a38" stroke-width="1.500"/></svg></button>
        <button class="find-all">查找全部</button>
        <label><input type="checkbox">依格式显示效果</label>
        <label><input type="checkbox">匹配大小写</label>
        <i class="sep"></i>
        <button class="find-replace" aria-label="查找与替换"><svg viewBox="0 0 32 32"><circle cx="18" cy="12" r="10.500" fill="#fff" stroke="#3a3a38" stroke-width="2"/><path d="M11 19L1 31" stroke="#3a3a38" stroke-width="4"/><text x="12" y="18" font-size="18" font-weight="bold" fill="#1e8bcd">a</text><text x="20" y="32" font-size="17" font-weight="bold" fill="#6a6a68">d</text></svg></button>
        <i class="sep"></i>
        <span class="find-result">搜索项未找到</span>
    </div>

    <footer class="statusbar">
        <span class="st-sheet">工作表 4，共 11 张</span>
        <span class="st-selection">已选中：2 行 1,024 列</span>
        <span class="st-style">默认</span>
        <span class="st-language">英语 (美国)</span>
        <span class="st-blank"></span>
        <span class="st-icon"><svg viewBox="0 0 26 18" fill="none"><path d="M1 4h13v10H1z" stroke="#1e8bcd" stroke-width="2"/><path d="M17 1h8M17 17h8M21 1v16" stroke="#3a3a38" stroke-width="2"/></svg></span>
        <span class="st-icon"><svg viewBox="0 0 26 18"><path d="M6 1h15v16H6z" fill="#fff" stroke="#c9211e" stroke-width="2"/><path d="M9 2h8v5H9zM9 11h9v6H9z" fill="none" stroke="#c9211e" stroke-width="2"/><path d="M14 12h3v4h-3z" fill="#c9211e"/></svg></span>
        <span class="st-gap"></span>
        <span class="st-sum">平均值: 6213.2; 求和: 31066</span>
        <span class="st-zoom">
            <button aria-label="缩小"><svg viewBox="0 0 16 16"><path d="M1 8h14" stroke="#3a3a38" stroke-width="3"/></svg></button>
            <input type="range" min="0" max="100" value="51" aria-label="缩放">
            <button aria-label="放大"><svg viewBox="0 0 16 16"><path d="M1 8h14M8 1v14" stroke="#3a3a38" stroke-width="3"/></svg></button>
        </span>
        <span class="st-percent">100%</span>
    </footer>

    <script src="sheet.js"></script>
</body>
</html>
```
FILE: styles.css
```
* {
    box-sizing: border-box;
}

body {
    margin: 0;
    height: 100vh;
    display: flex;
    flex-direction: column;
    overflow: hidden;
    background: #efefef;
    border-bottom: 2px solid #fff;
    color: #000;
    font-family: "Open Sans", "Noto Sans CJK SC", sans-serif;
    font-size: 18px;
    line-height: 24px;
}

button,
input,
select {
    font: inherit;
    color: inherit;
    margin: 0;
    padding: 0;
    border: 0;
    background: none;
    white-space: nowrap;
}

button {
    display: flex;
    align-items: center;
    justify-content: center;
}

svg {
    display: block;
    flex-shrink: 0;
    overflow: visible;
}

/* title, menu and toolbars */
.top {
    flex-shrink: 0;
    background: linear-gradient(#fff 20%, #fafafa 65%, #efefef);
    border-bottom: 1px solid #a8a8a8;
}

.snap-bar {
    position: absolute;
    top: 0;
    left: 50%;
    width: 362px;
    height: 2px;
    margin-left: -181px;
    background: #e5e5e5;
}

.snap-bar span {
    display: block;
    width: 72px;
    height: 2px;
    margin: 0 auto;
    background: #0078d7;
}

.titlebar {
    display: flex;
    align-items: center;
    height: 34px;
    padding: 0 2px 0 4px;
}

.app-icon {
    width: 20px;
    height: 24px;
}

h1 {
    margin: 0 auto 0 7px;
    font-size: 18px;
    font-weight: normal;
}

.window-buttons {
    display: flex;
}

.window-buttons button {
    width: 70px;
    height: 34px;
}

.window-buttons svg {
    width: 16px;
    height: 16px;
    fill: none;
    stroke: #000;
}

.menubar {
    display: flex;
    align-items: center;
    gap: 22px;
    height: 36px;
    padding: 0 6px 0 9px;
}

.menubar button {
    padding-bottom: 2px;
}

.menubar-right {
    display: flex;
    align-items: center;
    gap: 8px;
    margin-left: auto;
}

.toolbar {
    display: flex;
    align-items: center;
    height: 50px;
    padding-left: 4px;
}

.main-tools {
    padding-left: 3px;
}

.sep {
    flex-shrink: 0;
    width: 1px;
    height: 24px;
    margin: 0 4px 0 3px;
    background: #c4c4c4;
}

.tool {
    flex-shrink: 0;
    width: 45px;
    height: 46px;
    border: 1px solid transparent;
}

.tool svg {
    width: 32px;
    height: 32px;
}

.tool.wide svg {
    width: 36px;
}

.tool.active,
.side.active {
    background: #bfdff7;
    border: 1px solid #91c5ee;
}

.tool.drop {
    width: 61px;
    justify-content: flex-start;
    padding-left: 6px;
}

.tool.drop.wide {
    padding-left: 4px;
}

.tool.drop::after {
    content: "";
    margin-left: 10px;
    border: 5px solid transparent;
    border-top: 6px solid #000;
    border-bottom: 0;
}

.tool.drop.wide::after {
    margin-left: 8px;
}

.tool.faded::after {
    border-top-color: #999;
}

.tool text,
.find-replace text {
    font-family: "Open Sans", sans-serif;
}

.more {
    width: 16px;
    margin-left: auto;
}

/* text fields with a drop-down arrow */
.combo {
    display: grid;
    flex-shrink: 0;
    height: 31px;
    background: #fff;
    border: 1px solid #a6a6a6;
}

.combo > * {
    grid-area: 1 / 1;
}

.combo select,
.combo input {
    width: 100%;
    min-width: 0;
    padding: 0 28px 0 3px;
    appearance: none;
}

.chev {
    justify-self: end;
    width: 26px;
    height: 29px;
    fill: none;
    stroke: #444;
    stroke-width: 1;
    background: #e1e1e1;
    border-left: 1px solid #a6a6a6;
    pointer-events: none;
}

.font-name {
    width: 278px;
    margin-right: 8px;
    font-style: italic;
}

.font-size {
    width: 130px;
}

/* formula bar */
.formula-bar {
    display: flex;
    align-items: center;
    height: 40px;
    padding-left: 4px;
}

.name-box {
    width: 218px;
}

.name-box input {
    padding-bottom: 2px;
    font-size: 19px;
}

.fx {
    width: 38px;
    height: 32px;
}

.fx svg,
.side svg {
    width: 28px;
    height: 32px;
}

.fx-f,
.fx-x {
    font-family: "Liberation Serif", serif;
    font-style: italic;
    font-weight: bold;
    fill: #2a8fd0;
}

.fx-f {
    font-size: 29px;
}

.fx-x {
    font-size: 26px;
}

.sigma {
    width: 46px;
    justify-content: flex-start;
    gap: 10px;
}

.sigma svg {
    width: 20px;
    height: 26px;
}

.sigma::after {
    content: "";
    border: 5px solid transparent;
    border-top: 6px solid #000;
    border-bottom: 0;
}

.equals {
    width: 32px;
    height: 30px;
}

.equals svg {
    width: 18px;
    height: 14px;
}

.formula {
    flex: 1;
    height: 31px;
    padding: 0 6px 2px;
    background: #fff;
    border: 1px solid #a6a6a6;
    font-size: 19px;
}

.expand {
    width: 32px;
    height: 30px;
}

.expand::after {
    content: "";
    border: 8px solid transparent;
    border-top: 9px solid #000;
    border-bottom: 0;
}

/* sheet */
.work {
    display: flex;
    flex: 1;
    min-height: 0;
}

.document {
    display: flex;
    flex: 1;
    flex-direction: column;
    min-width: 0;
    border-right: 1px solid #a0a0a0;
}

.sheet-area {
    display: flex;
    flex: 1;
    min-height: 0;
}

.sheet {
    flex: 1;
    min-width: 0;
    overflow: hidden;
    background: #fff;
}

table {
    width: 100%;
    table-layout: fixed;
    border-collapse: separate;
    border-spacing: 0;
}

.w-head { width: 49px; }
.w-b { width: 85px; }
.w-c { width: 102px; }
.w-m { width: 126px; }
.w-l { width: 137px; }
.w-n { width: 136px; }
.w-o { width: 157px; }

th {
    height: 25px;
    padding: 0;
    background: #efefef;
    border-right: 1px solid #808080;
    border-bottom: 1px solid #808080;
    font-weight: normal;
    line-height: 24px;
}

thead th {
    height: 26px;
    padding-bottom: 2px;
    background: #0078d7;
    border-color: #0a68b8;
    color: #fff;
    font-weight: bold;
    line-height: 23px;
}

thead th:first-child {
    background: #efefef;
    border-color: #efefef #808080 #808080 #efefef;
}

td {
    position: relative;
    height: 25px;
    padding: 0 2px 0 1px;
    border-right: 1px solid #c0c0c0;
    border-bottom: 1px solid #c0c0c0;
    vertical-align: top;
    white-space: nowrap;
    font-family: "Liberation Sans", "Noto Sans CJK SC", sans-serif;
    font-size: 20px;
    line-height: 24px;
}

td.center,
.titles td {
    text-align: center;
}

.titles td {
    font-weight: bold;
}

td.raised {
    padding-left: 3px;
    line-height: 20px;
}

td.glyph {
    padding: 4px 0 0 4px;
    line-height: 20px;
}

.spell {
    text-decoration: underline wavy #d8383e 1px;
    text-underline-offset: 2px;
    text-decoration-skip-ink: none;
}

/* value is wider than its cell */
td.cut::after {
    content: "";
    position: absolute;
    top: 7px;
    right: 0;
    border: 5px solid transparent;
    border-left: 6px solid #e00000;
    border-right: 0;
}

.selected th {
    background: #0078d7;
    border-color: #0a68b8;
    color: #fff;
    font-weight: bold;
}

.selected td {
    background: #c0ddf5;
    border-color: #8fb0cc;
    color: #102a43;
}

.before-selection td,
.selected.last td {
    border-bottom-color: #2470a8;
}

.selected td.cursor {
    outline: 2px solid #000;
    outline-offset: -1px;
}

/* scroll bars */
.vscroll {
    display: flex;
    flex-direction: column;
    align-items: center;
    width: 26px;
}

.vscroll svg,
.hscroll svg {
    fill: none;
    stroke: #505050;
    stroke-width: 2;
}

.vscroll svg {
    width: 12px;
    height: 9px;
}

.split-v {
    width: 26px;
    height: 7px;
    border: solid #a0a0a0;
    border-width: 3px 6px 2px;
    background: #000;
}

.up {
    margin: 9px 0 8px;
}

.thumb-v {
    width: 24px;
    height: 16px;
    background: #cdcdcd;
}

.down {
    margin: auto 0 8px;
}

.hscroll {
    display: flex;
    align-items: center;
    height: 24px;
    padding-left: 8px;
}

.hscroll svg {
    width: 9px;
    height: 12px;
}

.thumb-h {
    flex: 47;
    height: 24px;
    margin-left: 8px;
    background: #cdcdcd;
}

.track-h {
    flex: 52;
}

.split-h {
    width: 7px;
    height: 24px;
    margin: 0 26px 0 8px;
    border: solid #a0a0a0;
    border-width: 5px 2px 5px 3px;
    background: #000;
}

/* sheet tabs */
.tabs {
    display: flex;
    align-items: stretch;
    height: 29px;
    padding-left: 15px;
}

.tab-nav {
    display: flex;
    gap: 15px;
}

.tab-nav svg {
    width: 12px;
    height: 18px;
    fill: #999;
}

.add-tab {
    margin: 0 8px 0 20px;
}

.add-tab svg {
    width: 20px;
    height: 20px;
}

.tab {
    padding: 0 19px;
    border-bottom: 3px solid transparent;
}

.tab.current {
    background: #fff;
    border-bottom-color: #666;
}

/* sidebar */
.sidebar {
    position: relative;
    display: flex;
    flex-direction: column;
    align-items: center;
    gap: 1px;
    width: 59px;
    padding-left: 7px;
}

.side-menu {
    height: 34px;
}

.side-menu svg {
    width: 16px;
    height: 12px;
}

.side {
    width: 45px;
    height: 46px;
    border: 1px solid transparent;
}

.side svg {
    width: 32px;
}

.grip {
    position: absolute;
    top: 45%;
    left: 0;
    display: flex;
    align-items: center;
    width: 6px;
    height: 73px;
    background: #666;
}

.grip svg {
    width: 6px;
    height: 10px;
    fill: #fff;
}

/* find bar */
.findbar {
    display: flex;
    flex-shrink: 0;
    align-items: center;
    height: 51px;
    padding: 0 0 2px 13px;
    border-top: 1px solid #a0a0a0;
}

.close-find svg {
    width: 28px;
    height: 28px;
}

.find-text {
    width: 250px;
    margin-left: 8px;
    color: #e00000;
}

.find-step {
    width: 46px;
}

.find-step svg {
    width: 30px;
    height: 16px;
}

.find-all {
    margin-right: 8px;
}

.findbar label {
    display: flex;
    align-items: center;
    gap: 4px;
    margin-right: 4px;
}

.findbar input[type="checkbox"] {
    width: 20px;
    height: 20px;
    appearance: none;
    background: #fff;
    border: 1px solid #333;
}

.find-replace {
    width: 45px;
}

.find-replace svg {
    width: 32px;
    height: 32px;
}

/* status bar */
.statusbar {
    display: flex;
    flex-shrink: 0;
    align-items: center;
    height: 29px;
    padding: 2px 0;
    border-top: 1px solid #a0a0a0;
}

.statusbar > span {
    display: flex;
    align-items: center;
    height: 24px;
    padding: 0 10px;
    border-right: 1px solid #b4b4b4;
    white-space: nowrap;
}

.statusbar > .st-sheet {
    width: 269px;
    padding-left: 12px;
}

.st-selection { width: 330px; }
.st-style { width: 146px; }

.st-language {
    width: 199px;
    justify-content: center;
}

.st-blank { width: 97px; }
.st-icon { width: 39px; }
.st-gap { width: 39px; }

.statusbar > .st-icon {
    padding: 0;
    justify-content: center;
}

.st-icon svg {
    width: 26px;
    height: 18px;
}

.st-sum {
    flex: 1;
    justify-content: center;
}

.statusbar > .st-zoom {
    width: 210px;
    padding: 0 3px;
    gap: 2px;
}

.st-zoom button svg {
    width: 16px;
    height: 16px;
}

.st-zoom input {
    flex: 1;
    min-width: 0;
    height: 16px;
    appearance: none;
    background: linear-gradient(#777, #777) center / 100% 2px no-repeat;
}

.st-zoom input::-webkit-slider-thumb {
    width: 6px;
    height: 15px;
    appearance: none;
    background: #ccc;
    border: 1px solid #444;
}

.statusbar > .st-percent {
    width: 68px;
    padding: 0 8px;
    border-right: 0;
}
```
FILE: sheet.js
```
// 汉字, 笔画数, 笔顺码, 拼音, 拼音输入, 扩充A区编码
const rows = [
    ["⺁", 2, "33", "yì", "yi4", "2E81"],
    ["𠂇", 2, "13", "zuǒ", "zuo3", "20087"],
    ["𠂉", 2, "31", "wǔ", "wu3", "20089"],
    ["𠃌", 1, "5", "sī", "si1", "200CC"],
    ["⺄", 1, "5", "fēi", "fei1", "2E84"],
    ["㑳", 12, "32355233552", "zhòu/zhū", "Zhou4/zhu1", "3473"],
    ["㑇", 7, "3235511", "zhòu/zhū", "Zhou4/zhu1", "3447"],
    ["⺈", 2, "35", "dāo", "dao1", "2E88"],
    ["⺋", 2, "55", "cāng", "cang1", "2E8B"],
    ["龴", 2, "54", "máo", "mao2", "9FB4"],
    ["㖞", 10, "2512512534", "wāi", "wai1", "359E"],
    ["㘚", 22, "25125112511", "hǎn", "han3", "361A"],
    ["㘎", 17, "25142551221", "hǎn", "han3", "360E"],
    ["⺌", 3, "243", "guāng", "guang1", "2E8C"],
    ["⺗", 4, "2344", "gōng", "gong1", "2E97"],
    ["㥮", 13, "44235523355", "zhòu", "zhou4", "396E"],
    ["㤘", 8, "44235511", "zhòu", "zhou4", "3918"],
    ["龵", 4, "3113", "shǒu", "shou3", "9FB5"],
    ["㧏", 7, "1212534", "gāng", "gang1", "39CF"],
    ["㧟", 8, "12144115", "kuǎi", "kuai3", "39DF"],
    ["㩳", 21, "12132411121", "sǒng", "song3", "3A73"],
    ["㧐", 7, "1215454", "sǒng", "song3", "39D0"],
    ["龶", 4, "1121", "qīng", "qing1", "9FB6"],
    ["龷", 4, "1221", "gòng", "gong4", "9FB7"],
    ["㭎", 8, "12342534", "gāng", "gang1", "3B4E"]
];

const rowClass = { 4: "before-selection", 5: "selected", 6: "selected last" };

const hex = n => n.toString(16).toUpperCase();
const spell = text => text.split("/").map(w => `<span class="spell">${w}</span>`).join("/");

document.getElementById("rows").insertAdjacentHTML("beforeend", rows.map((row, i) => {
    const [glyph, count, strokes, pinyin, input, ext] = row;
    const line = i + 2;
    return `<tr class="${rowClass[line] || ""}">
        <th>${line}</th>
        <td class="${line === 6 ? "cursor" : ""}">${30001 + i}</td>
        <td class="glyph">${glyph}</td>
        <td class="center">${count}</td>
        <td class="${strokes.length > 10 ? "cut" : ""}">${strokes}</td>
        <td class="center">530</td>
        <td>${spell(pinyin)}</td>
        <td>${input}</td>
        <td></td>
        <td>2S-${20903 + i}</td>
        <td></td>
        <td class="raised">${hex(0xFE50 + i)}</td>
        <td class="raised">${hex(0xE815 + i)}</td>
        <td class="raised">${ext}</td>
        <td></td>
        <td></td>
    </tr>`;
}).join(""));
```
